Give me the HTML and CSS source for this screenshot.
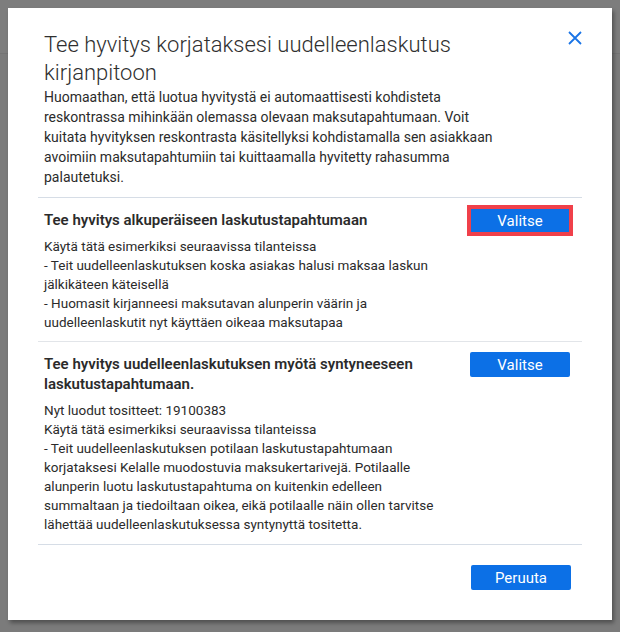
FILE: index.html
```html
<!DOCTYPE html>
<html lang="fi">
<head>
<meta charset="utf-8">
<title>Tee hyvitys</title>
<link rel="stylesheet" href="styles.css">
</head>
<body>
<div class="backdrop">
  <div class="page-strip"></div>
  <div class="dialog">
    <div class="dialog-header">
      <h1 class="dialog-title">Tee hyvitys korjataksesi uudelleenlaskutus kirjanpitoon</h1>
      <button class="close-btn" aria-label="Sulje">
        <svg width="14" height="14" viewBox="0 0 14 14"><path d="M1 1 L13 13 M13 1 L1 13" stroke="#1a74e6" stroke-width="1.8" fill="none"/></svg>
      </button>
    </div>
    <p class="intro">Huomaathan, että luotua hyvitystä ei automaattisesti kohdisteta reskontrassa mihinkään olemassa olevaan maksutapahtumaan. Voit kuitata hyvityksen reskontrasta käsitellyksi kohdistamalla sen asiakkaan avoimiin maksutapahtumiin tai kuittaamalla hyvitetty rahasumma palautetuksi.</p>

    <div class="option">
      <div class="option-text">
        <h2 class="option-title">Tee hyvitys alkuperäiseen laskutustapahtumaan</h2>
        <p class="option-body">Käytä tätä esimerkiksi seuraavissa tilanteissa<br>- Teit uudelleenlaskutuksen koska asiakas halusi maksaa laskun jälkikäteen käteisellä<br>- Huomasit kirjanneesi maksutavan alunperin väärin ja uudelleenlaskutit nyt käyttäen oikeaa maksutapaa</p>
      </div>
      <button class="btn btn-highlight">Valitse</button>
    </div>

    <div class="option option-last">
      <div class="option-text">
        <h2 class="option-title">Tee hyvitys uudelleenlaskutuksen myötä syntyneeseen laskutustapahtumaan.</h2>
        <p class="option-body">Nyt luodut tositteet: 19100383<br>Käytä tätä esimerkiksi seuraavissa tilanteissa<br>- Teit uudelleenlaskutuksen potilaan laskutustapahtumaan korjataksesi Kelalle muodostuvia maksukertarivejä. Potilaalle alunperin luotu laskutustapahtuma on kuitenkin edelleen summaltaan ja tiedoiltaan oikea, eikä potilaalle näin ollen tarvitse lähettää uudelleenlaskutuksessa syntynyttä tositetta.</p>
      </div>
      <button class="btn">Valitse</button>
    </div>

    <div class="dialog-footer">
      <button class="btn">Peruuta</button>
    </div>
  </div>
</div>
</body>
</html>
```

FILE: styles.css
```css
html, body {
  margin: 0;
  padding: 0;
}
body {
  width: 620px;
  height: 632px;
  overflow: hidden;
  background: #7b7b7b;
  font-family: Roboto, "Liberation Sans", sans-serif;
  color: #2b2b2b;
}
.backdrop {
  position: relative;
  width: 620px;
  height: 632px;
  padding-top: 8px;
  box-sizing: border-box;
}
.page-strip {
  position: absolute;
  left: 0;
  top: 0;
  width: 620px;
  height: 53px;
  border-bottom: 1px solid #747474;
  background: #7d7d7d;
}
.dialog {
  position: relative;
  margin-left: 8px;
  width: 604px;
  height: 612px;
  box-sizing: border-box;
  background: #ffffff;
  padding: 23px 30px 0;
  box-shadow: 2px 3px 4px rgba(0,0,0,0.35);
}
.dialog-header {
  display: flex;
  align-items: flex-start;
  justify-content: space-between;
}
.dialog-title {
  margin: 0;
  padding-left: 6px;
  width: 480px;
  font-size: 22px;
  line-height: 28px;
  font-weight: 300;
  color: #2f2f2f;
}
.close-btn {
  border: 0;
  background: none;
  padding: 0;
  margin: 0;
  width: 14px;
  height: 14px;
  display: flex;
}
.intro {
  margin: 0;
  padding: 0 68px 10px 6px;
  font-size: 14px;
  line-height: 20px;
  border-bottom: 1px solid #d6dde6;
}
.option {
  display: flex;
  align-items: flex-start;
  padding: 10px 12px 9px 6px;
  border-bottom: 1px solid #e2e5e9;
}
.option-last {
  padding-bottom: 10px;
  border-bottom-color: #d6dde6;
}
.option-text {
  flex: 1;
  padding-top: 2px;
  padding-right: 20px;
}
.option-title {
  margin: 0 0 7px;
  font-size: 15px;
  line-height: 20px;
  font-weight: 600;
}
.option-body {
  margin: 0;
  font-size: 13.5px;
  line-height: 19px;
}
.btn {
  flex: none;
  width: 100px;
  height: 25px;
  border: 0;
  border-radius: 2px;
  background: #0c70e6;
  color: #ffffff;
  font-family: Roboto, "Liberation Sans", sans-serif;
  font-size: 15px;
  padding: 0;
}
.btn-highlight {
  border-radius: 0;
  outline: 3px solid #f0404a;
  box-shadow: inset 0 0 0 1px #f0404a;
}
.dialog-footer {
  display: flex;
  justify-content: flex-end;
  padding: 20px 11px 0 0;
}
```
